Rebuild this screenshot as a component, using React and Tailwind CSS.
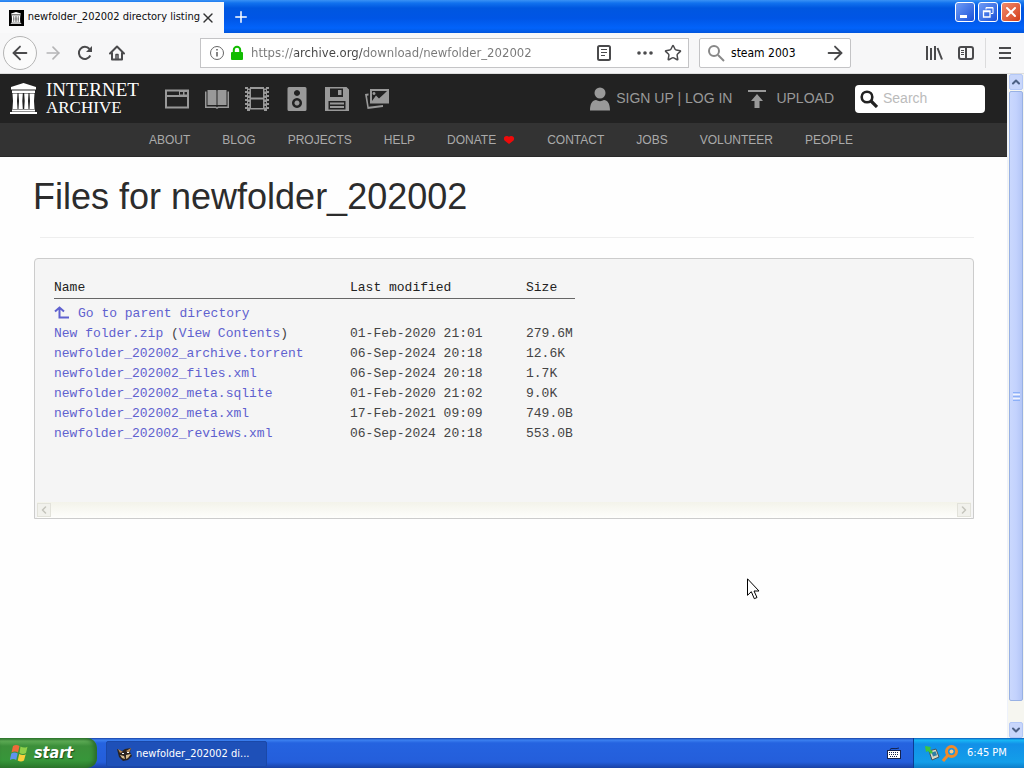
import { ArrowLeft, ArrowRight, ChevronDown, ChevronLeft, ChevronRight, ChevronUp, Plus, Star, X } from 'lucide-react';

const files = [
    { name: 'New folder.zip', view: true, date: '01-Feb-2020 21:01', size: '279.6M' },
    { name: 'newfolder_202002_archive.torrent', date: '06-Sep-2024 20:18', size: '12.6K' },
    { name: 'newfolder_202002_files.xml', date: '06-Sep-2024 20:18', size: '1.7K' },
    { name: 'newfolder_202002_meta.sqlite', date: '01-Feb-2020 21:02', size: '9.0K' },
    { name: 'newfolder_202002_meta.xml', date: '17-Feb-2021 09:09', size: '749.0B' },
    { name: 'newfolder_202002_reviews.xml', date: '06-Sep-2024 20:18', size: '553.0B' },
];

const navLinks = ['ABOUT', 'BLOG', 'PROJECTS', 'HELP', 'DONATE', 'CONTACT', 'JOBS', 'VOLUNTEER', 'PEOPLE'];

const Temple = ({ className }) => (
    <svg viewBox="0 0 27 31" className={className} fill="currentColor" aria-hidden="true">
        <path d="M13.500 0 26 4v2.500H1V4zM2 7.500h23V10H2zM2.500 10.500h5L7 18l.5 8h-5L3 18zM8.500 10.500h4.300L12.300 18l.5 8H8.500L9 18zM14.200 10.500h4.300L18 18l.5 8h-4.300l.5-8zM19.500 10.500h5L24 18l.5 8h-5l.5-8zM2 26.500h23V28.500H2zM0 29h27v2H0z" />
    </svg>
);

// Media type icons of the archive's top bar
const mediaIcons = [
    {
        label: 'Web',
        shape: (
            <path fillRule="evenodd" d="M0 2.500h24V21.500H0zM2 10v9.500h20V10zM2 4.500V8h12V4.500zM15 5v2.500h3V5zM19.500 5v2.500H22V5z" />
        ),
    },
    {
        label: 'Texts',
        shape: (
            <>
                <path d="M2.500 3H11l.5.5V18H2.500zM12.500 3.500 13 3h8.500v15h-9z" />
                <path d="M0 4.500h1.500V19.500H11l1 .8 1-.8h9.500V4.500H24V21H13.500l-1 .8h-1l-1-.8H0z" />
            </>
        ),
    },
    {
        label: 'Video',
        shape: (
            <path fillRule="evenodd" d="M0 0h3v1.500h2V0h14v1.500h2V0h3v2h-2v2h2v2h-2v2h2v2h-2v2h2v2h-2v2h2v2h-2v2h2v2h-2v2h-3v-1.500H5V24H2v-2H0v-2h2v-2H0v-2h2v-2H0v-2h2v-2H0V8h2V6H0V4h2V2H0zM6 2v8.500h12V2zM6 12.500V21h12v-8.500zM3 3v1.500h1.500V3zM3 7v1.500h1.500V7zM3 11v1.500h1.500V11zM3 15v1.500h1.500V15zM3 19v1.500h1.500V19zM19.500 3v1.500H21V3zM19.500 7v1.500H21V7zM19.500 11v1.500H21V11zM19.500 15v1.500H21V15zM19.500 19v1.500H21V19z" />
        ),
    },
    {
        label: 'Audio',
        shape: (
            <path fillRule="evenodd" d="M4 0h16q1.500 0 1.500 1.500v21q0 1.500-1.500 1.500H4q-1.500 0-1.500-1.500v-21Q2.500 0 4 0zM12 3a3 3 0 1 0 .01 0zM12 11a5 5 0 1 0 .01 0zM12 13.500a2.500 2.500 0 1 1-.01 0z" />
        ),
    },
    {
        label: 'Software',
        shape: (
            <path fillRule="evenodd" d="M0 0h21.500L24 2.500V24H0zM5 1.500V10h13V1.500zM13 3h3.500v5H13zM3.500 14v8.500h17V14zM5 15.500h14v2H5zM5 19h14v2H5z" />
        ),
    },
    {
        label: 'Images',
        shape: (
            <path fillRule="evenodd" d="M5 2h19v14.500H5zM7 4v10l4-5.500 3 3 6-5.500 2-2zM9 5a1.500 1.500 0 1 1-.01 0zM0 7l3.500-.6v2l-1.500.3 1.700 11L18 18v2L2.500 22z" />
        ),
    },
];

const TitleBar = () => (
    <header className="flex h-[33px] bg-[linear-gradient(to_bottom,#3a92f5_0px,#1272ee_3px,#0057e0_8px,#0055e5_18px,#0263fa_28px,#0055dd_33px)]">
        <div className="mt-[2px] flex w-56 items-center bg-[#f9f9fa] pl-[9px]">
            <span className="mr-1 flex size-4 items-center justify-center bg-black text-white">
                <Temple className="h-3 w-3" />
            </span>
            <span className="flex-1 whitespace-nowrap text-[11px] text-[#0c0c0d]">newfolder_202002 directory listing</span>
            <button aria-label="Close tab" className="mr-2 text-[#333]">
                <X size={16} strokeWidth={2} />
            </button>
        </div>
        <button aria-label="New tab" className="ml-2 text-white">
            <Plus size={18} strokeWidth={2} />
        </button>
        <div className="ml-auto mr-[3px] flex gap-[3px] pt-[2px]">
            <button aria-label="Minimize" className="flex size-5 items-end rounded-[3px] border border-white bg-linear-to-br from-[#6f9bf5] to-[#1a4fd8] p-[3px]">
                <span className="ml-[1px] h-[3px] w-[7px] bg-white" />
            </button>
            <button aria-label="Restore" className="flex size-5 items-center justify-center rounded-[3px] border border-white bg-linear-to-br from-[#6f9bf5] to-[#1a4fd8]">
                <svg width="12" height="12" viewBox="0 0 12 12" fill="none" stroke="#fff" aria-hidden="true">
                    <path d="M4 3.500V1.500h7v6H9M4 2h7" />
                    <path d="M1.500 5h6.500v6H1.500zM1 5.500h7" strokeWidth="1.300" />
                </svg>
            </button>
            <button aria-label="Close" className="flex size-5 items-center justify-center rounded-[3px] border border-white bg-linear-to-br from-[#f08a6c] to-[#d33b12] text-white">
                <X size={16} strokeWidth={3} />
            </button>
        </div>
    </header>
);

const Toolbar = () => (
    <div className="flex h-[41px] items-center border-b border-[#ddd] bg-[#f7f7f8] text-[#4a4a4c]">
        <div className="flex w-[200px] shrink-0 items-center pl-[3px]">
            <button aria-label="Back" className="flex size-[34px] items-center justify-center rounded-full border border-[#b5b5b5] bg-[#fbfbfb]">
                <ArrowLeft size={22} />
            </button>
            <button aria-label="Forward" className="ml-[6px] text-[#b5b5b6]">
                <ArrowRight size={20} />
            </button>
            <button aria-label="Reload" className="ml-3">
                <svg width="20" height="20" viewBox="0 0 20 20" fill="none" stroke="currentColor" strokeWidth="2" aria-hidden="true">
                    <path d="M15.300 12.500A6 6 0 1 1 14.500 6" />
                    <path d="M17 3v6h-6z" fill="currentColor" stroke="none" />
                </svg>
            </button>
            <button aria-label="Home" className="ml-3">
                <svg width="20" height="20" viewBox="0 0 20 20" fill="none" stroke="currentColor" strokeWidth="2" strokeLinecap="round" strokeLinejoin="round" aria-hidden="true">
                    <path d="M3 10.500 10 3.500l7 7M5 10v6.500h10V10" />
                    <path d="M9 16.500v-5h2v5" strokeWidth="1.500" />
                </svg>
            </button>
        </div>

        <div className="flex h-[30px] flex-1 items-center border border-[#c4c4c6] bg-white pl-2 pr-[6px]">
            <svg width="16" height="16" viewBox="0 0 16 16" fill="none" stroke="#666" aria-hidden="true">
                <circle cx="8" cy="8" r="6.500" />
                <path d="M8 7v4.500M8 4v1.500" strokeWidth="1.600" />
            </svg>
            <svg className="ml-1" width="16" height="16" viewBox="0 0 16 16" aria-hidden="true">
                <path d="M4.800 8V5a3.200 3.200 0 0 1 6.400 0v3" fill="none" stroke="#12bc00" strokeWidth="2" />
                <rect x="2" y="7" width="12" height="8" rx="1" fill="#12bc00" />
            </svg>
            <input
                aria-label="Address"
                defaultValue="https://archive.org/download/newfolder_202002"
                className="ml-[6px] min-w-0 flex-1 bg-[linear-gradient(to_right,#777_44px,#444_44px,#444_112px,#777_112px)] bg-clip-text text-[13px] text-transparent outline-none"
            />
            <button aria-label="Reader view">
                <svg width="18" height="18" viewBox="0 0 18 18" fill="none" stroke="currentColor" aria-hidden="true">
                    <rect x="3" y="2" width="12" height="14" rx="1.500" strokeWidth="2" />
                    <path d="M6 5.500h6M6 8.500h6M6 11.500h4" />
                </svg>
            </button>
            <button aria-label="Page actions" className="ml-6">
                <svg width="16" height="16" viewBox="0 0 16 16" fill="currentColor" aria-hidden="true">
                    <circle cx="2" cy="8" r="1.800" />
                    <circle cx="8" cy="8" r="1.800" />
                    <circle cx="14" cy="8" r="1.800" />
                </svg>
            </button>
            <button aria-label="Bookmark" className="ml-[11px]">
                <Star size={18} strokeWidth={2} />
            </button>
        </div>

        <div className="ml-[10px] flex h-[30px] w-[152px] items-center rounded-[2px] border border-[#c4c4c6] bg-white px-1">
            <svg className="ml-[3px] shrink-0" width="18" height="18" viewBox="0 0 18 18" fill="none" stroke="#888" strokeWidth="2" aria-hidden="true">
                <circle cx="7" cy="7" r="5" />
                <path d="m11 11 6 6" />
            </svg>
            <input aria-label="Search the web" defaultValue="steam 2003" className="ml-[6px] w-0 min-w-0 flex-1 bg-transparent text-[12px] text-black outline-none" />
            <button aria-label="Search">
                <ArrowRight size={22} />
            </button>
        </div>

        <button aria-label="Library" className="ml-[74px]">
            <svg width="18" height="18" viewBox="0 0 18 18" fill="none" stroke="currentColor" strokeWidth="2" aria-hidden="true">
                <path d="M2 2v14M6 4v12M10 2v14M12.500 4 17 15.500" />
            </svg>
        </button>
        <button aria-label="Sidebars" className="ml-[14px]">
            <svg width="18" height="18" viewBox="0 0 18 18" fill="none" stroke="currentColor" aria-hidden="true">
                <rect x="2" y="3" width="14" height="12" rx="2" strokeWidth="2" />
                <path d="M9 3v12" strokeWidth="2" />
                <path d="M4 6.500h3M4 8.500h3M4 10.500h3" />
            </svg>
        </button>
        <div className="ml-[10px] h-[30px] w-px bg-[#dcdcdd]" />
        <button aria-label="Menu" className="ml-[10px] mr-[10px]">
            <svg width="18" height="18" viewBox="0 0 18 18" stroke="currentColor" strokeWidth="2" aria-hidden="true">
                <path d="M3 4h12M3 9h12M3 14h12" />
            </svg>
        </button>
    </div>
);

const ArchiveHeader = () => (
    <>
        <div className="flex h-[49px] items-center bg-[#222] text-[#999]">
            <a href="#home" className="flex items-center pl-[10px] text-white">
                <Temple className="h-[31px] w-[27px]" />
                <span className="ml-[9px] flex w-[100px] flex-col font-['Liberation_Serif',serif] text-[19px] leading-[18px]">
                    <span>INTERNET</span>
                    <span className="text-[17px]">ARCHIVE</span>
                </span>
            </a>
            <nav className="ml-[19px] flex gap-4">
                {mediaIcons.map((icon) => (
                    <a key={icon.label} href="#media" aria-label={icon.label}>
                        <svg width="24" height="24" viewBox="0 0 24 24" fill="currentColor" aria-hidden="true">
                            {icon.shape}
                        </svg>
                    </a>
                ))}
            </nav>
            <a href="#account" className="ml-auto flex items-center whitespace-nowrap text-[14px]">
                <svg className="mr-[6px]" width="20" height="24" viewBox="0 0 20 24" fill="currentColor" aria-hidden="true">
                    <circle cx="10" cy="6" r="5.500" />
                    <path d="M0 23.500c0-7 2.500-10.500 6-10.500 2.500 1.500 5.500 1.500 8 0 3.500 0 6 3.500 6 10.500z" />
                </svg>
                SIGN UP | LOG IN
            </a>
            <a href="#upload" className="ml-4 flex items-center text-[14px]">
                <svg className="mr-[10px]" width="18" height="18" viewBox="0 0 18 18" fill="currentColor" aria-hidden="true">
                    <path d="M0 0h18v2H0zM9 4l6 7h-3.500v7h-5v-7H3z" />
                </svg>
                UPLOAD
            </a>
            <label className="ml-[21px] mr-[22px] flex h-7 w-[130px] items-center rounded-[4px] bg-white pl-[5px]">
                <svg className="shrink-0" width="18" height="18" viewBox="0 0 18 18" fill="none" stroke="#222" aria-hidden="true">
                    <circle cx="7" cy="7" r="5.300" strokeWidth="2.600" />
                    <path d="m11 11 6 6" strokeWidth="3.200" />
                </svg>
                <input placeholder="Search" aria-label="Search the archive" className="ml-[5px] w-0 flex-1 text-[14px] outline-none placeholder:text-[#bbb]" />
            </label>
        </div>
        <nav className="flex h-[34px] items-center gap-8 border-b border-[#292929] bg-[#333] pl-[149px] pt-px text-[12px] text-[#aaa]">
            {navLinks.map((link) => (
                <a key={link} href="#nav" className="flex items-center">
                    {link}
                    {link === 'DONATE' && (
                        <svg className="ml-[7px]" width="12" height="10" viewBox="0 0 12 10" fill="#ee0a0a" aria-hidden="true">
                            <path d="M6 9 1.500 5.500C0 3 1.500 1 3.500 1c1 0 2 .3 2.500.8C6.500 1.300 7.500 1 8.500 1c2 0 3.500 2 2 4.500z" />
                        </svg>
                    )}
                </a>
            ))}
        </nav>
    </>
);

const Listing = () => (
    <main className="pl-[33px] pr-[33px]">
        <h1 className="pt-[17px] text-[36px] leading-[46px] text-[#2c2c2c]">Files for newfolder_202002</h1>
        <hr className="ml-[7px] mt-[17px] border-[#eee]" />
        <section className="ml-px mt-5 flex h-[261px] flex-col rounded-t-[4px] border border-[#ccc] bg-[#f5f5f5]">
            <table className="ml-[19px] mt-[19px] w-[521px] table-fixed border-collapse text-left font-['Liberation_Mono',monospace] text-[13px] leading-5 text-[#444]">
                <thead>
                    <tr className="border-b border-[#666] text-[#222]">
                        <th className="w-[296px] p-0 font-normal">Name</th>
                        <th className="w-[176px] p-0 font-normal">Last modified</th>
                        <th className="p-0 font-normal">Size</th>
                    </tr>
                </thead>
                <tbody>
                    <tr>
                        <td colSpan={3} className="p-0 pt-[5px] text-[#5f61cf]">
                            <a href="#parent" className="flex items-center">
                                <svg className="mr-[9px]" width="15" height="16" viewBox="0 0 15 16" fill="none" stroke="currentColor" strokeWidth="2" aria-hidden="true">
                                    <path d="M1 5.500 5.500 1.500 10 5.500M5.500 2v9.500H15" />
                                </svg>
                                Go to parent directory
                            </a>
                        </td>
                    </tr>
                    {files.map((file) => (
                        <tr key={file.name}>
                            <td className="p-0">
                                <a href="#file" className="text-[#5f61cf]">{file.name}</a>
                                {file.view && (
                                    <> (<a href="#view" className="text-[#5f61cf]">View Contents</a>)</>
                                )}
                            </td>
                            <td className="p-0">{file.date}</td>
                            <td className="p-0">{file.size}</td>
                        </tr>
                    ))}
                </tbody>
            </table>
            {/* Disabled horizontal scrollbar */}
            <div className="mx-[2px] mt-auto flex h-4 items-center justify-between bg-linear-to-b from-[#f3f3ea] to-[#fefefc] text-[#c4c4bc]">
                <span className="flex h-[14px] w-[14px] items-center justify-center border border-[#e2e2da] bg-[#f1f1ec]">
                    <ChevronLeft size={12} strokeWidth={3} />
                </span>
                <span className="flex h-[14px] w-[14px] items-center justify-center border border-[#e2e2da] bg-[#f1f1ec]">
                    <ChevronRight size={12} strokeWidth={3} />
                </span>
            </div>
        </section>
    </main>
);

const ScrollBar = () => (
    <div className="flex w-[17px] shrink-0 flex-col border-l border-[#eef2fb] bg-[#f6f6f0] text-[#4d6185]">
        <button aria-label="Scroll up" className="mx-px flex h-4 items-center justify-center rounded-[2px] border border-[#b4c8f6] bg-[#c8d6fb]">
            <ChevronUp size={12} strokeWidth={4} />
        </button>
        <div className="mx-px mt-px flex h-[610px] flex-col items-center justify-center gap-px rounded-[2px] border border-[#98b1e4] bg-linear-to-r from-[#cad8fd] via-[#c3d2fd] to-[#b4c6f6]">
            <span className="h-px w-[7px] bg-[#8cb0f8]" />
            <span className="h-px w-[7px] bg-[#eef4fe]" />
            <span className="h-px w-[7px] bg-[#8cb0f8]" />
            <span className="h-px w-[7px] bg-[#eef4fe]" />
            <span className="h-px w-[7px] bg-[#8cb0f8]" />
        </div>
        <button aria-label="Scroll down" className="mx-px mt-auto flex h-4 items-center justify-center rounded-[2px] border border-[#b4c8f6] bg-[#c8d6fb]">
            <ChevronDown size={12} strokeWidth={4} />
        </button>
    </div>
);

const TaskBar = () => (
    <footer className="flex h-[30px] items-stretch bg-[linear-gradient(to_bottom,#1941a5_0px,#3c81f0_2px,#2563e0_5px,#245edb_24px,#1941a5_30px)] text-white">
        <button className="flex w-[97px] items-center rounded-r-[10px] bg-[linear-gradient(to_bottom,#2f7a2f_0px,#5eac56_3px,#3c8f3a_8px,#37963a_22px,#2c7a2c_30px)] pl-[10px] shadow-[inset_-3px_0_4px_#2a6b2a]">
            <svg className="mr-1" width="20" height="20" viewBox="0 0 20 20" aria-hidden="true">
                <path d="M3 3q3-2 6.500 0L8 9.500q-3-2-6.500 0z" fill="#ee6a3a" />
                <path d="M10.500 3.500q3.500 2 7 .2L16 10q-3 1.800-6.500 0z" fill="#8fd04a" />
                <path d="M1.300 10.500q3-2 6.400 0L6.200 17q-3-2-6.400 0z" fill="#5f93ee" />
                <path d="M9.200 11q3.500 2 6.500.2L14 17.500q-3 1.800-6.300 0z" fill="#f8cf3c" />
            </svg>
            <span className="text-[16px] font-bold italic leading-5 [text-shadow:1px_1px_1px_#1d4d1d]">start</span>
        </button>
        <button className="ml-[9px] mt-[3px] mb-px flex w-[161px] items-center rounded-[2px] border border-[#1a48a8] bg-[#1e50b8] pl-[10px] text-[11px]">
            <svg className="mr-[3px] shrink-0" width="16" height="16" viewBox="0 0 16 16" aria-hidden="true">
                <path d="M0 3l5 2 3-2 6-1-1 4 2 4-4 4-5 1-4-4z" fill="#2a2320" />
                <path d="M1 3l5 3-3 1zM14 2l-5 3 3 2z" fill="#b88c5a" />
                <path d="M3 9l4 1 1 3-3-1zM9 9l5-1-3 4-2 1z" fill="#d8bc8c" />
                <path d="M5 7h2v1H5zM10 6h2v1h-2z" fill="#fff" />
            </svg>
            newfolder_202002 di...
        </button>
        <div className="ml-auto flex items-center pr-3">
            <svg width="14" height="12" viewBox="0 0 14 12" aria-hidden="true">
                <path d="M3 3q0-2 3-1.500T12 1" fill="none" stroke="#15234e" />
                <rect x="0.500" y="3.500" width="13" height="8" fill="#fff" stroke="#15234e" />
                <path d="M2 5.500h10M2 7.500h10M3 9.500h8" stroke="#15234e" strokeDasharray="1 1" />
            </svg>
        </div>
        <div className="flex w-[111px] items-center border-l border-[#0a3d94] bg-[linear-gradient(to_bottom,#0c59b9_0px,#18b9f5_2px,#1290e8_6px,#139ee9_24px,#0d7dc8_30px)] pl-[10px] text-[11px]">
            <svg width="16" height="16" viewBox="0 0 16 16" aria-hidden="true">
                <path d="M5 6l7-2 3 8-7 3z" fill="#d8d8c4" stroke="#44545a" />
                <path d="M7.500 7.500l4-1.200 1.500 4-4 1.200z" fill="#2c7fa6" />
                <path d="M1 1l6 1-1 2 3 3-2 2-3-3-2 1z" fill="#3cc441" />
            </svg>
            <svg className="ml-[2px]" width="17" height="17" viewBox="0 0 17 17" fill="none" aria-hidden="true">
                <circle cx="9.500" cy="6.500" r="5" stroke="#ee8b2c" strokeWidth="3" />
                <path d="M6 10l-5 6" stroke="#ee8b2c" strokeWidth="3" />
                <circle cx="9.500" cy="6.500" r="2" fill="#f6c88c" />
            </svg>
            <span className="ml-2 whitespace-nowrap">6:45 PM</span>
        </div>
    </footer>
);

const App = () => {
    return (
        <div className="relative flex min-h-screen flex-col bg-white font-['DejaVu_Sans_Condensed','DejaVu_Sans',sans-serif]">
            <TitleBar />
            <Toolbar />
            <div className="flex flex-1">
                <div className="min-w-0 flex-1 bg-[#fefefe] font-['Liberation_Sans',sans-serif]">
                    <ArchiveHeader />
                    <Listing />
                </div>
                <ScrollBar />
            </div>
            <TaskBar />

            {/* Mouse pointer */}
            <svg className="pointer-events-none absolute left-[747px] top-[578px]" width="13" height="22" viewBox="0 0 13 22" aria-hidden="true">
                <path d="M.5.800v16.500l3.800-3.600 3 7 2.700-1.200-3-6.500h5z" fill="#fff" stroke="#000" />
            </svg>
        </div>
    );
};

export default App;
